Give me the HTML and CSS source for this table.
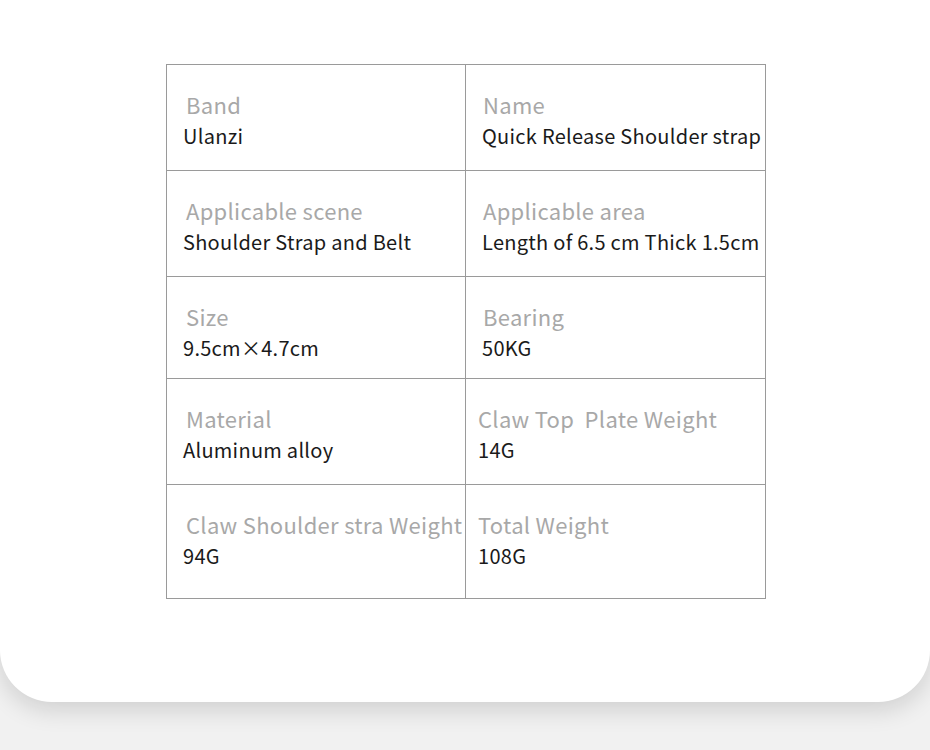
FILE: index.html
```html
<!DOCTYPE html>
<html>
<head>
<meta charset="utf-8">
<link rel="stylesheet" href="styles.css">
</head>
<body>
<div class="card">
  <div class="specs">
    <div class="cell r1"><div class="label">Band</div><div class="value">Ulanzi</div></div>
    <div class="cell r1 right"><div class="label">Name</div><div class="value">Quick Release Shoulder strap</div></div>
    <div class="cell r2"><div class="label">Applicable scene</div><div class="value">Shoulder Strap and Belt</div></div>
    <div class="cell r2 right"><div class="label">Applicable area</div><div class="value">Length of 6.5 cm Thick 1.5cm</div></div>
    <div class="cell r3"><div class="label">Size</div><div class="value">9.5cm×4.7cm</div></div>
    <div class="cell r3 right"><div class="label">Bearing</div><div class="value">50KG</div></div>
    <div class="cell r4"><div class="label">Material</div><div class="value">Aluminum alloy</div></div>
    <div class="cell r4 right tight"><div class="label">Claw Top&nbsp; Plate Weight</div><div class="value">14G</div></div>
    <div class="cell r5"><div class="label">Claw Shoulder stra Weight</div><div class="value">94G</div></div>
    <div class="cell r5 right tight"><div class="label">Total Weight</div><div class="value">108G</div></div>
  </div>
</div>
</body>
</html>
```

FILE: styles.css
```css
html, body {
  margin: 0;
  padding: 0;
  background: #f1f1f1;
}
body {
  width: 930px;
  height: 750px;
  overflow: hidden;
  font-family: "Noto Sans CJK SC", "Noto Sans", sans-serif;
}
.card {
  background: #ffffff;
  height: 702px;
  border-radius: 0 0 52px 52px;
  box-shadow: 0 8px 24px rgba(0, 0, 0, 0.14);
  padding-top: 64px;
  box-sizing: border-box;
}
.specs {
  margin-left: 166px;
  width: 600px;
  box-sizing: border-box;
  border-top: 1px solid #9a9a9a;
  border-left: 1px solid #9a9a9a;
  display: grid;
  grid-template-columns: 299px 300px;
  grid-template-rows: 106px 106px 102px 106px 114px;
}
.cell {
  box-sizing: border-box;
  border-right: 1px solid #9a9a9a;
  border-bottom: 1px solid #9a9a9a;
  padding: 24px 0 0 16px;
  white-space: nowrap;
}
.cell.tight {
  padding-left: 12px;
}
.label {
  font-size: 22px;
  line-height: 30px;
  color: #a8a8a8;
  margin-left: 3px;
  font-weight: 400;
  letter-spacing: 0.3px;
}
.right .label {
  margin-left: 1px;
}
.tight .label {
  margin-left: 0;
}
.value {
  font-size: 20px;
  line-height: 30px;
  margin-top: 2px;
  color: #1a1a1a;
  font-weight: 400;
  letter-spacing: 0.28px;
}
```
